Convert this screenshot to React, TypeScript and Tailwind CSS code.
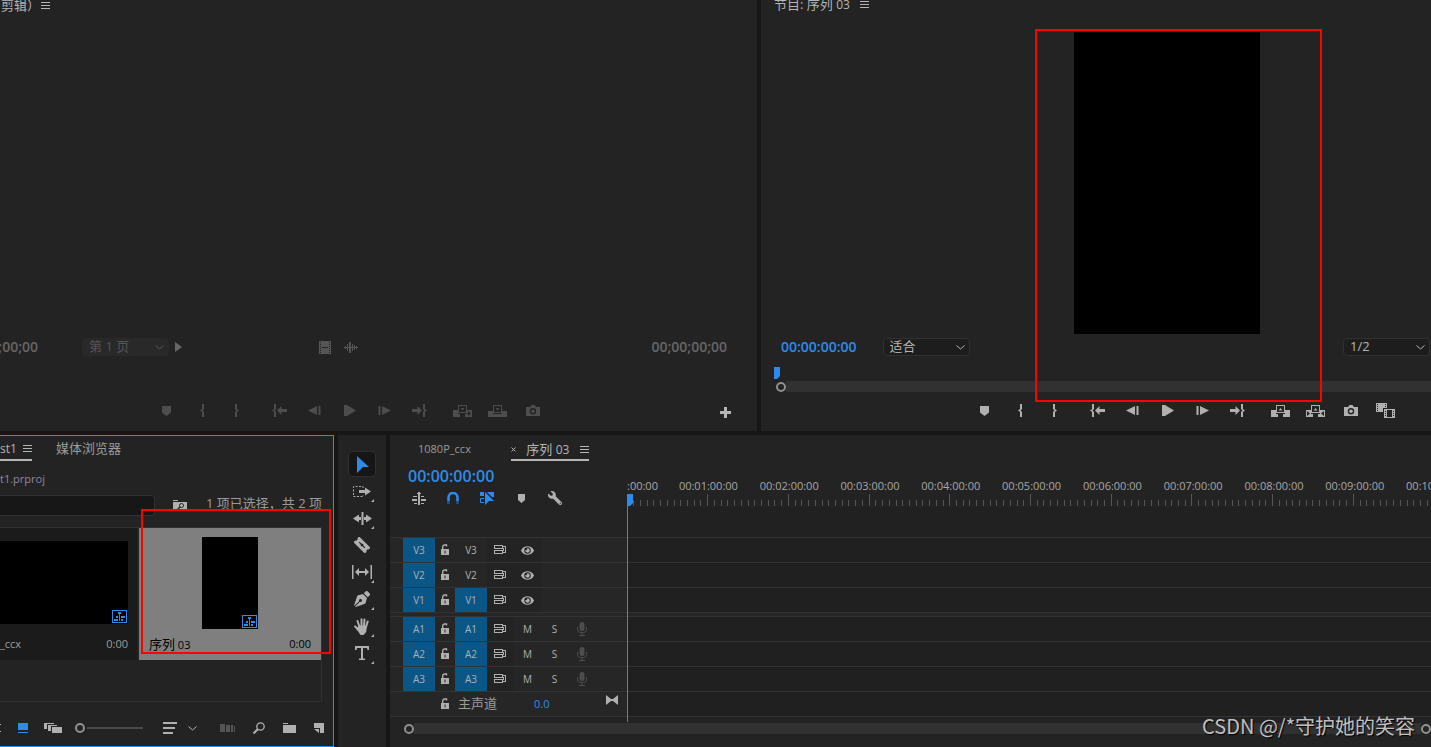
import type { ReactNode } from "react";
import { FaEye, FaPenNib, FaWrench } from "react-icons/fa";

type IconProps = {
  w: number;
  h: number;
  children: ReactNode;
  className?: string;
};

function Icon({ w, h, children, className = "" }: IconProps) {
  return (
    <svg
      width={w}
      height={h}
      viewBox={`0 0 ${w} ${h}`}
      fill="currentColor"
      aria-hidden="true"
      className={`shrink-0 ${className}`}
    >
      {children}
    </svg>
  );
}

const MenuIcon = () => (
  <Icon w={9} h={7}>
    <path d="M0 0h9v1H0zM0 3h9v1H0zM0 6h9v1H0z" />
  </Icon>
);

const ChevronIcon = () => (
  <Icon w={9} h={5}>
    <path d="M.5.5l4 3.500 4-3.500" fill="none" stroke="currentColor" />
  </Icon>
);

const MarkerIcon = () => (
  <Icon w={9} h={10}>
    <path d="M0 0h9v6.500L4.500 10 0 6.500z" />
  </Icon>
);

const InIcon = () => (
  <Icon w={4} h={13}>
    <path d="M2 0h2v5L2.500 6.500 4 8v5H2V8L0 6.500 2 5z" />
  </Icon>
);

const OutIcon = () => (
  <Icon w={4} h={13}>
    <path d="M2 0H0v5l1.500 1.500L0 8v5h2V8l2-1.500L2 5z" />
  </Icon>
);

const GoInIcon = () => (
  <Icon w={15} h={13}>
    <path d="M2 0h2v5L2.500 6.500 4 8v5H2V8L0 6.500 2 5zM5 6.500L9.500 2v3H15v3H9.500v3z" />
  </Icon>
);

const GoOutIcon = () => (
  <Icon w={15} h={13}>
    <path d="M13 0h-2v5l1.500 1.500L11 8v5h2V8l2-1.500L13 5zM10 6.500L5.500 2v3H0v3h5.500v3z" />
  </Icon>
);

const StepBackIcon = () => (
  <Icon w={13} h={9}>
    <path d="M9 0v9L0 4.500zM10.500 0h2v9h-2z" />
  </Icon>
);

const StepForwardIcon = () => (
  <Icon w={13} h={9}>
    <path d="M4 0v9l9-4.500zM.5 0h2v9h-2z" />
  </Icon>
);

const PlayIcon = () => (
  <Icon w={12} h={11}>
    <path d="M0 0h3l9 5.500L3 11H0z" />
  </Icon>
);

const InsertIcon = () => (
  <Icon w={19} h={12}>
    <path d="M0 5h5v4h2v3H0zM12 9h2V5h5v7h-7zM15 6v5l3-2.500z" fillRule="evenodd" />
    <path d="M5 0h9v8H5zM6 1v6h7V1z" fillRule="evenodd" />
    <path d="M7.500 3h4l-2 2.500z" />
  </Icon>
);

const OverwriteIcon = () => (
  <Icon w={19} h={12}>
    <path d="M0 6h5v3h9V6h5v6H0z" />
    <path d="M5 0h9v8H5zM6 1v6h7V1z" fillRule="evenodd" />
    <path d="M7.500 3h4l-2 2.500z" />
  </Icon>
);

const LiftIcon = () => (
  <Icon w={19} h={12}>
    <path d="M0 5h5v4h2v3H0zM12 9h2V5h5v7h-7z" />
    <path d="M5 0h9v8H5zM6 1v6h7V1z" fillRule="evenodd" />
    <path d="M7.500 5.500h4l-2-2.500z" />
  </Icon>
);

const ExtractIcon = () => (
  <Icon w={19} h={12}>
    <path
      d="M0 5h5v4h2v3H0zM1 6v5l3-2.500zM12 9h2V5h5v7h-7zM18 6v5l-3-2.500z"
      fillRule="evenodd"
    />
    <path d="M5 0h9v8H5zM6 1v6h7V1z" fillRule="evenodd" />
    <path d="M7.500 5.500h4l-2-2.500z" />
  </Icon>
);

const CameraIcon = () => (
  <Icon w={14} h={11}>
    <path
      d="M0 2h4l1.500-2h3L10 2h4v9H0zM7 3a3.200 3.200 0 100 6.400A3.200 3.200 0 007 3z"
      fillRule="evenodd"
    />
    <circle cx="7" cy="6.200" r="1.800" />
  </Icon>
);

const CompareIcon = () => (
  <Icon w={19} h={15}>
    <path
      d="M0 0h11v5H7v4H0zM1 1v1h1V1zM1 3v1h1V3zM1 5v1h1V5zM1 7v1h1V7zM9 1v1h1V1zM9 3v1h1V3z"
      fillRule="evenodd"
    />
    <path
      d="M8 6h11v9H8zM11 7v7h5V7zM9 8v1h1V8zM9 10v1h1v-1zM9 12v1h1v-1zM17 8v1h1V8zM17 10v1h1v-1zM17 12v1h1v-1z"
      fillRule="evenodd"
    />
  </Icon>
);

const SequenceBadge = () => (
  <span className="absolute right-px bottom-px flex h-[13px] w-[15px] items-center justify-center border border-[#2d8ceb] bg-black text-[#2d8ceb]">
    <Icon w={11} h={9}>
      <path d="M4 0h3v2H6v7H5V2H4zM2 4h2v2H2zM7 4h4v2H7zM0 7h4v2H0zM7 7h2v2H7z" />
    </Icon>
  </span>
);

type Action = { label: string; icon: ReactNode };

const sharedActions: Action[] = [
  { label: "转到入点", icon: <GoInIcon /> },
  { label: "后退一帧", icon: <StepBackIcon /> },
  { label: "播放", icon: <PlayIcon /> },
  { label: "前进一帧", icon: <StepForwardIcon /> },
  { label: "转到出点", icon: <GoOutIcon /> },
];

const sourceActions: Action[] = [
  { label: "插入", icon: <InsertIcon /> },
  { label: "覆盖", icon: <OverwriteIcon /> },
  { label: "导出帧", icon: <CameraIcon /> },
];

const programActions: Action[] = [
  { label: "提升", icon: <LiftIcon /> },
  { label: "提取", icon: <ExtractIcon /> },
  { label: "导出帧", icon: <CameraIcon /> },
  { label: "比较视图", icon: <CompareIcon /> },
];

function ActionButton({ label, icon }: Action) {
  return (
    <button
      aria-label={label}
      className="flex h-[23px] w-[35px] shrink-0 items-center justify-center"
    >
      {icon}
    </button>
  );
}

function Transport({ actions }: { actions: Action[] }) {
  return (
    <div className="flex gap-2">
      <div className="flex">
        <ActionButton label="添加标记" icon={<MarkerIcon />} />
        <ActionButton label="标记入点" icon={<InIcon />} />
        <ActionButton label="标记出点" icon={<OutIcon />} />
      </div>
      <div className="flex">
        {sharedActions.map((a) => (
          <ActionButton key={a.label} {...a} />
        ))}
      </div>
      <div className="flex">
        {actions.map((a) => (
          <ActionButton key={a.label} {...a} />
        ))}
      </div>
    </div>
  );
}

function Dropdown({
  label,
  value,
  disabled = false,
}: {
  label: string;
  value: string;
  disabled?: boolean;
}) {
  return (
    <div
      className={`relative flex h-[18px] w-[87px] shrink-0 items-center rounded-sm border ${
        disabled
          ? "border-[#292929] bg-[#292929] text-[#555]"
          : "border-[#313131] bg-[#1d1d1d] text-[#b5b5b5]"
      }`}
    >
      <select
        aria-label={label}
        disabled={disabled}
        className="h-7 w-full shrink-0 appearance-none bg-transparent pl-1.5 text-[13px] opacity-100"
      >
        <option>{value}</option>
      </select>
      <span className="pointer-events-none absolute right-1 flex h-full items-center">
        <ChevronIcon />
      </span>
    </div>
  );
}

function SourceMonitor() {
  return (
    <section className="flex min-w-0 flex-col bg-[#232323]">
      <div className="flex h-[13px] items-end overflow-hidden pl-px text-[#b5b5b5]">
        <div className="flex items-center gap-1">
          <h2 className="w-9 text-[13px] leading-4 whitespace-nowrap">剪辑）</h2>
          <MenuIcon />
        </div>
      </div>
      <div className="flex-1" />
      <div className="flex h-[26px] items-center justify-between pr-[30px]">
        <div className="flex items-center text-[#666]">
          <span className="flex w-[38px] justify-end overflow-hidden text-sm font-semibold">
            ;00;00
          </span>
          <div className="ml-11">
            <Dropdown label="页" value="第 1 页" disabled />
          </div>
          <Icon w={7} h={10} className="ml-1.5">
            <path d="M0 0l7 5-7 5z" />
          </Icon>
          <Icon w={12} h={13} className="ml-[137px] text-[#555]">
            <path
              d="M0 0h12v13H0zM1 1v1h1V1zM1 3v1h1V3zM1 5v1h1V5zM1 7v1h1V7zM1 9v1h1V9zM1 11v1h1v-1zM10 1v1h1V1zM10 3v1h1V3zM10 5v1h1V5zM10 7v1h1V7zM10 9v1h1V9zM10 11v1h1v-1zM3 6v1h6V6z"
              fillRule="evenodd"
            />
          </Icon>
          <Icon w={14} h={11} className="ml-[13px] text-[#555]">
            <path d="M0 5h14v1H0zM1 4h1v3H1zM3 2h1v7H3zM5 0h2v11H5zM8 2h1v7H8zM10 3h1v5h-1zM12 4h1v3h-1z" />
          </Icon>
        </div>
        <span className="text-sm font-semibold text-[#666]">00;00;00;00</span>
      </div>
      <div className="h-[39px]" />
      <div className="flex h-8 items-start justify-between pr-[26px] pl-[149px] text-[#4d4d4d]">
        <Transport actions={sourceActions} />
        <button
          aria-label="按钮编辑器"
          className="flex h-[27px] items-center text-[#b5b5b5]"
        >
          <Icon w={11} h={11}>
            <path d="M4 0h3v4h4v3H7v4H4V7H0V4h4z" />
          </Icon>
        </button>
      </div>
    </section>
  );
}

function ProgramMonitor() {
  return (
    <section className="flex min-w-0 flex-col bg-[#232323]">
      <div className="flex h-[13px] items-end overflow-hidden pl-[13px] text-[#b5b5b5]">
        <div className="flex items-center gap-2.5">
          <h2 className="text-[13px] leading-4 whitespace-nowrap">
            节目: 序列 <span className="text-xs">03</span>
          </h2>
          <MenuIcon />
        </div>
      </div>
      <div className="flex flex-1 justify-center pt-[19px] pl-[142px]">
        <div className="relative aspect-[93/151] min-h-[302px] bg-black">
          <div className="pointer-events-none absolute -top-[3px] -right-[62px] -bottom-[68px] -left-[39px] z-10 border-2 border-[#fe0000]" />
        </div>
      </div>
      <div className="flex h-[26px] items-center justify-between pr-px pl-5">
        <div className="flex items-center gap-[26px]">
          <span className="text-sm font-semibold text-[#2d8ceb]">
            00:00:00:00
          </span>
          <Dropdown label="缩放级别" value="适合" />
        </div>
        <Dropdown label="回放分辨率" value="1/2" />
      </div>
      <div className="h-[39px] pt-[7px] pl-[13px]">
        <Icon w={6} h={12} className="text-[#2d8ceb]">
          <path d="M0 0h6v9l-3 3H0z" />
        </Icon>
        <div className="mt-0.5 ml-0.5 flex h-[11px] items-center">
          <span className="h-2.5 w-2.5 rounded-full border-2 border-[#909090]" />
          <span className="h-full flex-1 bg-[#313131]" />
        </div>
      </div>
      <div className="flex h-8 items-start pl-[206px] text-[#b0b0b0]">
        <Transport actions={programActions} />
      </div>
    </section>
  );
}

function ProjectPanel() {
  return (
    <section className="flex w-[334px] shrink-0 flex-col border-y border-r border-[#2d8ceb] bg-[#232323] text-[#9b9b9b]">
      <div className="flex h-[25px] items-stretch gap-6 leading-6">
        <div className="flex w-8 items-center justify-between border-b-2 border-[#b5b5b5] pt-0.5 text-[#b5b5b5]">
          <h2 className="text-xs">st1</h2>
          <MenuIcon />
        </div>
        <h2 className="text-[13px]">媒体浏览器</h2>
      </div>
      <p className="mt-2.5 text-[11px] leading-4 text-[#8c86a8]">t1.prproj</p>
      <div className="mt-2 flex h-[21px] items-center">
        <input
          aria-label="搜索"
          className="h-full w-[155px] rounded-r-sm border border-l-0 border-[#313131] bg-[#171717]"
        />
        <Icon w={14} h={11} className="ml-[18px] text-[#b0b0b0]">
          <path d="M0 0h5v1H0zM0 2h14v9H0z" />
          <circle cx="8.500" cy="5.500" r="2" fill="none" stroke="#232323" />
          <path d="M7 7l-3 3" stroke="#232323" strokeWidth="1.500" />
        </Icon>
        <p className="ml-[19px] self-start text-[13px] leading-4 whitespace-nowrap">
          1 项已选择，共 2 项
        </p>
      </div>
      <div className="mt-[11px] mr-[11px] flex flex-1 items-start gap-0.5 border-t border-r border-b border-[#313131] text-[11px]">
        <figure className="h-[132px] w-[137px] bg-[#1b1b1b] pt-[13px] pr-[9px]">
          <div className="relative h-[83px] bg-black">
            <SequenceBadge />
          </div>
          <figcaption className="mt-3 flex justify-between leading-4">
            <span>_ccx</span>
            <span>0:00</span>
          </figcaption>
        </figure>
        <figure className="relative h-[132px] flex-1 bg-[#7f7f7f] px-2.5 pt-[9px] text-black">
          <div className="relative mx-auto h-[92px] w-14 bg-black">
            <SequenceBadge />
          </div>
          <figcaption className="mt-[7px] flex justify-between leading-4">
            <span>
              <span className="text-[13px]">序列</span> 03
            </span>
            <span>0:00</span>
          </figcaption>
          <div className="pointer-events-none absolute -top-[19px] -right-2.5 bottom-1.5 left-0.5 border-2 border-[#fe0000]" />
        </figure>
      </div>
      <div className="flex h-[44px] items-center pt-2 text-[#b0b0b0]">
        <Icon w={1} h={9}>
          <path d="M0 0h1v1H0zM0 7h1v1H0z" />
        </Icon>
        <button aria-label="图标视图" className="ml-[17px] text-[#2d8ceb]">
          <Icon w={10} h={10}>
            <path d="M0 0h10v7H0zM0 9h10v1H0z" />
          </Icon>
        </button>
        <button aria-label="自由变换视图" className="ml-4">
          <Icon w={18} h={10}>
            <path d="M0 0h10v1H3v5H0zM4 2h9v1H7v5H4zM8 4h10v6H8z" />
          </Icon>
        </button>
        <label className="ml-[13px] flex w-[68px] items-center">
          <input
            type="range"
            aria-label="缩放"
            min={0}
            max={100}
            defaultValue={0}
            className="h-2.5 w-full appearance-none bg-[linear-gradient(#4a4a4a,#4a4a4a)] bg-[length:56px_2px] bg-[position:right_center] bg-no-repeat [&::-webkit-slider-thumb]:h-2.5 [&::-webkit-slider-thumb]:w-2.5 [&::-webkit-slider-thumb]:appearance-none [&::-webkit-slider-thumb]:rounded-full [&::-webkit-slider-thumb]:border-2 [&::-webkit-slider-thumb]:border-[#909090]"
          />
        </label>
        <button aria-label="排序图标" className="ml-5 flex items-center gap-[11px]">
          <Icon w={14} h={12}>
            <path d="M0 0h14v2H0zM0 5h12v2H0zM0 10h10v2H0z" />
          </Icon>
          <ChevronIcon />
        </button>
        <div className="ml-[23px] flex items-center gap-[18px]">
          <button aria-label="自动匹配序列" className="text-[#555]">
            <Icon w={15} h={8}>
              <path d="M0 0h5v8H0zM6 1h4v7H6zM11 1h2v7h-2zM14 2h1v6h-1z" />
            </Icon>
          </button>
          <button aria-label="查找">
            <Icon w={12} h={12}>
              <circle cx="7.500" cy="4.500" r="3.700" fill="none" stroke="currentColor" strokeWidth="1.300" />
              <path d="M5 7l-4.500 4.500" stroke="currentColor" strokeWidth="2" />
            </Icon>
          </button>
          <button aria-label="新建素材箱">
            <Icon w={13} h={10}>
              <path d="M0 0h5v1H0zM0 2h13v8H0z" />
            </Icon>
          </button>
          <button aria-label="新建项">
            <Icon w={10} h={10}>
              <path d="M0 0h10v10H6V5H0zM0 6h5v4z" />
            </Icon>
          </button>
        </div>
      </div>
    </section>
  );
}

const tools = [
  {
    label: "选择工具",
    icon: (
      <Icon w={13} h={17} className="text-[#2d8ceb]">
        <path d="M1 0l12 11H7l-6 6z" />
      </Icon>
    ),
  },
  {
    label: "向前选择轨道工具",
    more: true,
    icon: (
      <Icon w={18} h={11}>
        <path
          d="M10 2V.5H.5v10H10V9"
          fill="none"
          stroke="currentColor"
          strokeDasharray="2 1.500"
        />
        <path d="M6 4h6V1.500l6 4-6 4V7H6z" />
      </Icon>
    ),
  },
  {
    label: "波纹编辑工具",
    more: true,
    icon: (
      <Icon w={19} h={13}>
        <path d="M8.500 0h2v13h-2zM0 6.500l6-4V5h2v3H6v2.500zM19 6.500l-6-4V5h-2v3h2v2.500z" />
      </Icon>
    ),
  },
  {
    label: "剃刀工具",
    icon: (
      <Icon w={16} h={16}>
        <g transform="rotate(45 8 8)">
          <path d="M0 4h16v2.500l-1 .5v2l1 .5V12H0V9.500L1 9V7l-1-.5z" />
          <path d="M4 8h8" stroke="#232323" strokeWidth="1.200" />
          <circle cx="8" cy="8" r="1.400" fill="#232323" />
        </g>
      </Icon>
    ),
  },
  {
    label: "外滑工具",
    more: true,
    icon: (
      <Icon w={20} h={14}>
        <path d="M0 0h1.500v14H0zM18.500 0H20v14h-1.500zM3 7l4-4v3h6V3l4 4-4 4V8H7v3z" />
      </Icon>
    ),
  },
  { label: "钢笔工具", more: true, icon: <FaPenNib size={16} /> },
  {
    label: "手形工具",
    more: true,
    icon: (
      <Icon w={16} h={17}>
        <path
          d="M5.500 9L3.500 3M7.500 8V1.200M10 8l.5-6.500M12 9l1.700-5.500M4.500 12L1.200 8.500"
          stroke="currentColor"
          strokeWidth="2"
          strokeLinecap="round"
        />
        <path d="M4.500 7.500h8.500l-.8 6.500-2.700 3H6.500L2.500 11z" />
      </Icon>
    ),
  },
  {
    label: "文字工具",
    more: true,
    icon: (
      <Icon w={14} h={14}>
        <path d="M0 0h14v4h-1.500L12 2H8v10.500h2V14H4v-1.500h2V2H2l-.5 2H0z" />
      </Icon>
    ),
  },
];

function Toolbar() {
  return (
    <nav className="flex w-12 shrink-0 flex-col items-center bg-[#232323] pt-4 text-[#b0b0b0]">
      {tools.map((tool, index) => (
        <button
          key={tool.label}
          aria-label={tool.label}
          className={`relative mb-px flex h-[26px] w-7 items-center justify-center rounded-sm ${
            index === 0 ? "border border-[#2f2f2f] bg-[#161616]" : ""
          }`}
        >
          {tool.icon}
          {tool.more && (
            <Icon w={3} h={3} className="absolute right-0.5 bottom-0.5">
              <path d="M3 0v3H0z" />
            </Icon>
          )}
        </button>
      ))}
    </nav>
  );
}

const rulerLabels = [
  "00:01:00:00",
  "00:02:00:00",
  "00:03:00:00",
  "00:04:00:00",
  "00:05:00:00",
  "00:06:00:00",
  "00:07:00:00",
  "00:08:00:00",
  "00:09:00:00",
  "00:10:00:00",
];

// twelve ticks for each labelled minute
const ticks = Array.from({ length: 121 }, (_, i) => ({
  x: Math.floor((i * 807) / 120),
  major: i % 12 === 0,
}));

function Ruler() {
  return (
    <div className="h-full min-w-0 flex-1 overflow-hidden pt-[17px]">
      <div className="flex w-[849px] text-[11px] leading-4 text-[#a8a8a8]">
        <span className="w-[41px]">:00:00</span>
        {rulerLabels.map((label) => (
          <span key={label} className="flex-1 text-center">
            {label}
          </span>
        ))}
      </div>
      <svg width="808" height="12" fill="#555" aria-hidden="true">
        {ticks.map(({ x, major }) => (
          <rect
            key={x}
            x={x}
            y={major ? 0 : 6}
            width="1"
            height={major ? 12 : 6}
          />
        ))}
      </svg>
    </div>
  );
}

const LockIcon = () => (
  <Icon w={8} h={12}>
    <path
      d="M1.700 5V3a2 2 0 012-2h1.800v1.500"
      fill="none"
      stroke="currentColor"
      strokeWidth="1.400"
    />
    <path d="M0 5h8v6H0zM3.500 6.500v3h1v-3z" fillRule="evenodd" />
  </Icon>
);

const SyncIcon = () => (
  <Icon w={13} h={11}>
    <path
      d="M0 0h9v4H0zM1 1v2h7V1zM0 5h9v4H0zM1 6v2h7V6zM9 1h3v7H9V7h2V2H9zM9 3h1v3H9z"
      fillRule="evenodd"
    />
  </Icon>
);

const MicIcon = () => (
  <Icon w={10} h={14} className="text-[#4d4d4d]">
    <rect x="2.500" y="0" width="5" height="9" rx="2.500" />
    <path
      d="M.5 5v2.500a3 3 0 003 3h3a3 3 0 003-3V5M5 11v2.500M2 13.500h6"
      fill="none"
      stroke="currentColor"
    />
  </Icon>
);

function Track({ name, targeted }: { name: string; targeted: boolean }) {
  const audio = name.startsWith("A");

  return (
    <div className="flex h-[25px] border-t border-[#333]">
      <div className="flex w-[237px] shrink-0 items-stretch bg-[#262626] pl-[13px] text-[11px] text-[#b0b0b0]">
        <button className="w-8 bg-[#095687] text-[10px]">{name}</button>
        <button
          aria-label={`锁定 ${name}`}
          className="flex w-5 items-center justify-center"
        >
          <LockIcon />
        </button>
        <button
          className={`w-8 text-[10px] ${targeted ? "bg-[#095687]" : ""}`}
        >
          {name}
        </button>
        <button
          aria-label={`同步锁定 ${name}`}
          className="flex w-[27px] items-center justify-center bg-[#232323]"
        >
          <SyncIcon />
        </button>
        {audio ? (
          <>
            <button className="w-[27px] text-[10px]">M</button>
            <button className="w-[27px] text-[10px]">S</button>
            <button
              aria-label="画外音录制"
              className="flex w-[27px] items-center justify-center"
            >
              <MicIcon />
            </button>
          </>
        ) : (
          <button
            aria-label={`切换 ${name} 输出`}
            className="flex w-[27px] items-center justify-center bg-[#232323]"
          >
            <FaEye size={13} />
          </button>
        )}
      </div>
      <div className="flex-1 bg-[#202020]" />
    </div>
  );
}

function Timeline() {
  return (
    <section className="relative flex min-w-0 flex-1 flex-col bg-[#232323] text-[#9b9b9b]">
      <div className="flex h-[26px] gap-10 pl-7">
        <h2 className="text-[11px] leading-[28px]">1080P_ccx</h2>
        <div className="flex w-[78px] items-center justify-between border-b-2 border-[#b5b5b5] pt-1 text-[#b5b5b5]">
          <button aria-label="关闭序列">
            <Icon w={5} h={5}>
              <path d="M.5.5l4 4M4.500.5l-4 4" stroke="currentColor" />
            </Icon>
          </button>
          <h2 className="text-[13px] leading-5 whitespace-nowrap">
            序列 <span className="text-xs">03</span>
          </h2>
          <MenuIcon />
        </div>
      </div>

      <div className="flex h-[46px]">
        <div className="w-[237px] shrink-0 pt-1 pl-[18px]">
          <p className="text-base leading-[22px] font-semibold text-[#2d8ceb]">
            00:00:00:00
          </p>
          <div className="flex h-[22px] items-center gap-5 pl-1 text-[#b0b0b0] [&>button]:flex [&>button]:w-3.5 [&>button]:justify-center">
            <button aria-label="嵌套或单个序列">
              <Icon w={14} h={13}>
                <path d="M6 0h2v13H6zM5 1h4v1H5zM1 4h4v1H1zM9 4h3v1H9zM0 7h5v2H0zM9 7h5v2H9zM2 11h3v1H2zM9 11h3v1H9z" />
              </Icon>
            </button>
            <button aria-label="对齐" className="text-[#2d8ceb]">
              <Icon w={12} h={12}>
                <path
                  d="M1.500 9V5.500a4.500 4.500 0 019 0V9"
                  fill="none"
                  stroke="currentColor"
                  strokeWidth="2.600"
                />
                <path d="M0 9h3v3H0zM9 9h3v3H9z" fill="#1a4d80" />
              </Icon>
            </button>
            <button aria-label="链接选择项" className="text-[#2d8ceb]">
              <Icon w={14} h={13} className="overflow-visible">
                <path d="M0 0h4v4H0zM7 0h7v5h-2z" />
                <path d="M4 6.500H.5v4H4" fill="none" stroke="currentColor" />
                <path d="M5 0l9 9h-5l-4 4z" />
              </Icon>
            </button>
            <button aria-label="添加标记">
              <Icon w={7} h={9}>
                <path d="M0 0h7v6L3.500 9 0 6z" />
              </Icon>
            </button>
            <button aria-label="时间轴显示设置">
              <FaWrench size={14} className="-scale-x-100" />
            </button>
          </div>
        </div>
        <Ruler />
      </div>

      <div className="flex h-[30px]">
        <div className="w-[237px]" />
        <div className="flex-1 bg-[#212121]" />
      </div>
      <Track name="V3" targeted={false} />
      <Track name="V2" targeted={false} />
      <Track name="V1" targeted />
      <div className="h-1 border-t border-[#333] bg-[#262626]" />
      <Track name="A1" targeted />
      <Track name="A2" targeted />
      <Track name="A3" targeted />
      <div className="flex h-[26px] border-y border-[#333]">
        <div className="flex w-[237px] shrink-0 items-center bg-[#262626] pr-[9px] pl-[51px]">
          <button aria-label="锁定主声道" className="text-[#b0b0b0]">
            <LockIcon />
          </button>
          <span className="ml-[9px] text-[13px]">主声道</span>
          <span className="ml-[37px] flex-1 text-[11px] text-[#2d8ceb]">
            0.0
          </span>
          <Icon w={12} h={18} className="text-[#b0b0b0]">
            <path d="M0 0l5 4h2l5-4v10L7 6H5l-5 4z" />
          </Icon>
        </div>
        <div className="flex-1 bg-[#202020]" />
      </div>
      <div className="mt-1.5 mb-[13px] flex h-[11px] items-center pl-3.5">
        <span className="h-2.5 w-2.5 rounded-full border-2 border-[#909090]" />
        <span className="h-full flex-1 bg-[#313131]" />
        <span className="h-2.5 w-2.5 rounded-full border-2 border-[#909090]" />
      </div>

      {/* playhead */}
      <div className="pointer-events-none absolute top-[59px] bottom-[25px] left-[237px] border-l border-[#2d8ceb] text-[#2d8ceb]">
        <Icon w={5} h={12}>
          <path d="M0 0h5v9l-3 3H0z" />
        </Icon>
      </div>

      <p className="pointer-events-none absolute right-4 bottom-[7px] font-['Noto_Sans_CJK_SC',sans-serif] text-xl leading-7 text-[#c0c0c0] [text-shadow:1px_1px_1px_#000]">
        CSDN @/*守护她的笑容
      </p>
    </section>
  );
}

export default function App() {
  return (
    <main className="flex min-h-screen flex-col gap-1 overflow-hidden bg-[#161616] font-['Open_Sans','Noto_Sans_CJK_SC',sans-serif]">
      <div className="grid flex-1 grid-cols-[757fr_670fr] gap-1">
        <SourceMonitor />
        <ProgramMonitor />
      </div>
      <div className="flex gap-1">
        <ProjectPanel />
        <Toolbar />
        <Timeline />
      </div>
    </main>
  );
}
